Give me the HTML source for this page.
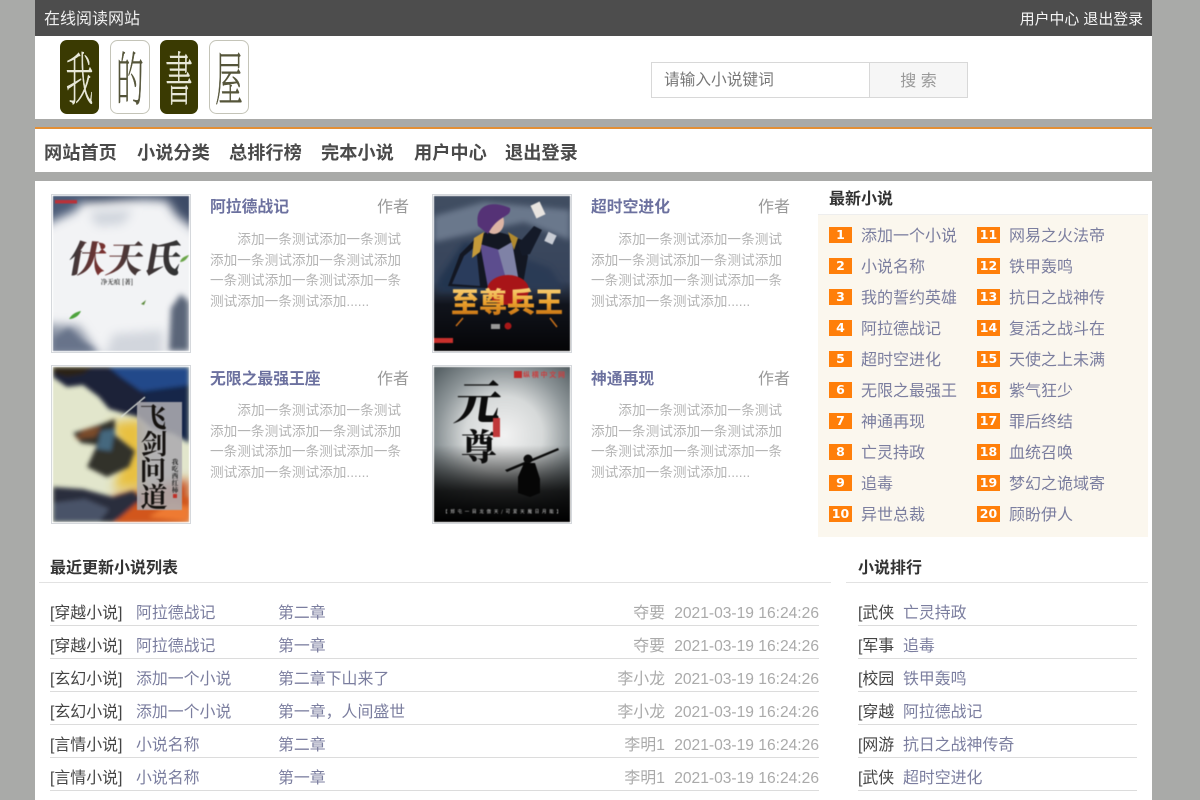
<!DOCTYPE html>
<html lang="zh-CN"><head><meta charset="utf-8"><title>在线阅读网站</title>
<style>
*{margin:0;padding:0;box-sizing:border-box}
html,body{width:1200px;height:800px;overflow:hidden;background:#a9aaa8}
body{position:relative;font-family:"Liberation Sans","Noto Sans CJK SC",sans-serif;color:#333}
.a{position:absolute;white-space:nowrap}
.w{position:absolute;background:#fff;left:35px;width:1117px}
.h{font-weight:bold;font-size:16px;color:#333;line-height:20px;margin-top:1px}
.nav{top:142px;font-size:18.2px;font-weight:bold;color:#4a4a4a;line-height:22px}
.cov{position:absolute;width:140px;height:159px;background:#fff;border:1px solid #d5d8dc;padding:1px;overflow:hidden}
.cov svg{display:block;width:136px;height:155px;filter:blur(.45px)}
.t{font-size:15.8px;font-weight:bold;color:#6c719f;line-height:20px}
.au{font-size:16px;color:#999;line-height:20px}
.s{position:absolute;width:192px;font-size:13.65px;line-height:20.6px;color:#b4b4b4;text-indent:27.3px;word-break:break-all}
.n{position:absolute;width:23px;height:16px;background:#ff7f0a;color:#fff;font:bold 12.5px/16px "DejaVu Sans",sans-serif;text-align:center}
.x{position:absolute;font-size:16px;line-height:20px;color:#7b7e9f;white-space:nowrap;margin-top:1px}
.r{position:absolute;height:33px;border-bottom:1px solid #dcdcdc}
.r span{position:absolute;top:0;line-height:42px;font-size:15.9px;white-space:nowrap}
.r span.d{font-size:15.6px}
.c{color:#444}.l{color:#7b7e9f}.m{color:#aaa}
</style></head><body>
<div class="a" style="left:35px;top:0;width:1117px;height:36px;background:#4d4d4d"></div>
<div class="a" style="left:44px;top:10px;font-size:16px;line-height:20px;color:#f0f0f0">在线阅读网站</div>
<div class="a" style="right:57px;top:10px;font-size:14.9px;line-height:20px;color:#f5f5f5">用户中心 退出登录</div>

<div class="w" style="top:36px;height:83px"></div>
<svg class="a" style="left:58px;top:38px" width="194" height="78" viewBox="0 0 194 78">
<rect x="2" y="2" width="39" height="74" rx="7" fill="#3a3a02"/>
<rect x="52.5" y="2.5" width="39" height="73" rx="7" fill="#fff" stroke="#c4c4b8"/>
<rect x="102" y="2" width="38" height="74" rx="7" fill="#3a3a02"/>
<rect x="151.5" y="2.5" width="39" height="73" rx="7" fill="#fff" stroke="#c4c4b8"/>
<g font-family="'Noto Serif CJK SC',serif" font-weight="200" text-anchor="middle">
<text transform="translate(21.5,50) scale(.95,2)" font-size="29" fill="#e8e8d8" y="6" stroke="#e8e8d8" stroke-width=".3">我</text>
<text transform="translate(72,50) scale(.95,2)" font-size="29" fill="#55553a" y="6" stroke="#55553a" stroke-width=".3">的</text>
<text transform="translate(121,50) scale(.95,2)" font-size="29" fill="#e8e8d8" y="6" stroke="#e8e8d8" stroke-width=".3">書</text>
<text transform="translate(171,50) scale(.95,2)" font-size="29" fill="#55553a" y="6" stroke="#55553a" stroke-width=".3">屋</text>
</g></svg>

<div class="a" style="left:651px;top:62px;width:219px;height:36px;background:#fff;border:1px solid #d8d8d8;font-size:15.7px;line-height:35px;padding-left:12px;color:#777">请输入小说键词</div>
<div class="a" style="left:869px;top:62px;width:99px;height:36px;background:#f6f6f6;border:1px solid #d8d8d8;font-size:16px;line-height:37px;text-align:center;color:#999">搜 索</div>

<div class="a" style="left:35px;top:127px;width:1117px;height:2px;background:#e38f35"></div>
<div class="w" style="top:129px;height:43px"></div>
<div class="a nav" style="left:44px">网站首页</div>
<div class="a nav" style="left:137px">小说分类</div>
<div class="a nav" style="left:229px">总排行榜</div>
<div class="a nav" style="left:321px">完本小说</div>
<div class="a nav" style="left:414px">用户中心</div>
<div class="a nav" style="left:505px">退出登录</div>

<div class="w" style="top:181px;height:619px"></div>

<div class="cov" style="left:51px;top:194px"><svg viewBox="0 0 136 155">
<defs>
<filter id="b1" filterUnits="userSpaceOnUse" x="-30" y="-30" width="196" height="215"><feGaussianBlur stdDeviation="5"/></filter>
<filter id="b1s" filterUnits="userSpaceOnUse" x="-30" y="-30" width="196" height="215"><feGaussianBlur stdDeviation="3"/></filter>
<linearGradient id="rd1" x1="0" x2="1"><stop offset="0" stop-color="#35383a"/><stop offset=".3" stop-color="#7d3230"/><stop offset=".5" stop-color="#4a3838"/><stop offset="1" stop-color="#303334"/></linearGradient></defs>
<rect width="136" height="155" fill="#f2f3f5"/>
<g filter="url(#b1)">
<path d="M-10-10H146V6L90 3 50 6-10 8Z" fill="#3a4a64"/>
<path d="M-10-10H34L24 14-10 30Z" fill="#4c5c78"/>
<path d="M104-10H146V36L124 20Z" fill="#3c4c66"/>
<path d="M36 16 80 14 70 28 44 30Z" fill="#cfd4dc"/>
<path d="M-10 128 26 130 50 165H-10Z" fill="#8b94a6"/>
<path d="M60 138 110 134 110 165 50 165Z" fill="#d2d6dd"/>
</g>
<g filter="url(#b1s)"><path d="M116 155 118 112 128 98 136 106V155Z" fill="#5a6578"/><path d="M0 142 16 132 30 146 44 155H0Z" fill="#68738a"/></g>
<rect x="2" y="4" width="22" height="3.5" fill="#b8323a"/>
<path d="M16 123C19 118 23 116 28 115 26 120 21 123 16 123Z" fill="#4da33c"/><path d="M127 66C128 62 132 60 136 59 134 63 131 66 127 66Z" fill="#6aa548"/><path d="M88 108 93 104 91 109Z" fill="#5c8a3c"/>
<text transform="translate(70,76) skewX(-10)" text-anchor="middle" font-family="'Noto Serif CJK SC',serif" font-weight="900" font-size="37" fill="url(#rd1)" textLength="112">伏天氏</text>
<text x="64" y="88" text-anchor="middle" font-family="'Noto Serif CJK SC',serif" font-weight="700" font-size="6.5" fill="#444">净无痕 [著]</text>
</svg></div>

<div class="cov" style="left:432px;top:194px"><svg viewBox="0 0 136 155">
<defs><linearGradient id="g2" x1="0" y1="0" x2="0" y2="1"><stop offset="0" stop-color="#414e62"/><stop offset=".55" stop-color="#36435a"/><stop offset=".7" stop-color="#11141c"/><stop offset="1" stop-color="#050507"/></linearGradient>
<linearGradient id="g2b" x1="0" y1="0" x2="0" y2="1"><stop offset="0" stop-color="#ffe79a"/><stop offset=".55" stop-color="#eaa02c"/><stop offset="1" stop-color="#b8600c"/></linearGradient>
<filter id="b2" filterUnits="userSpaceOnUse" x="-30" y="-30" width="196" height="215"><feGaussianBlur stdDeviation="3"/></filter></defs>
<rect width="136" height="155" fill="url(#g2)"/>
<g filter="url(#b2)"><path d="M0 20 50 6 136 14V44L90 26 0 46Z" fill="#6a788c"/><path d="M4 84 30 46 50 50 54 96H4Z" fill="#243450"/><path d="M84 60 116 72 130 94H78Z" fill="#2a3a54"/></g>
<path d="M14 90 26 58 42 42 56 34 72 38 88 44 94 60 88 94Z" fill="#131722"/>
<path d="M18 88 30 60 42 50 46 90Z" fill="#2a3c5c"/>
<path d="M46 48 66 54 76 90 54 92Z" fill="#5c4d8e"/><path d="M64 54 78 46 86 92 74 90Z" fill="#7f82a6"/>
<path d="M40 42 50 36 46 56 38 62Z" fill="#c59a3a"/><path d="M74 36 84 42 80 54Z" fill="#b0892e"/>
<ellipse cx="60" cy="26" rx="10" ry="12" fill="#dcb4a4"/><path d="M44 30C40 8 58 4 76 12 78 22 64 18 54 38Z" fill="#553276"/>
<path d="M84 48 100 30 108 34 96 58 88 60Z" fill="#141a28"/>
<rect x="99" y="7" width="10" height="14" transform="rotate(-25 104 14)" fill="#e8e4e0"/><rect x="112" y="37" width="9" height="10" transform="rotate(25 116 42)" fill="#c8ccd4"/>
<ellipse cx="74" cy="94" rx="21" ry="15" fill="#a81518"/>
<text x="73" y="116" text-anchor="middle" font-family="'Noto Sans CJK SC',sans-serif" font-weight="900" font-size="28" fill="url(#g2b)" textLength="112" lengthAdjust="spacingAndGlyphs">至尊兵王</text>
<path d="M22 130 29 122M116 122 123 131" stroke="#c8701a" stroke-width="1.5"/>
<rect x="57" y="128" width="9" height="5" fill="#999"/><circle cx="74" cy="130" r="3.5" fill="#a81818"/>
<rect x="0" y="142" width="19" height="5" fill="#c8302c"/>
</svg></div>

<div class="cov" style="left:51px;top:365px"><svg viewBox="0 0 136 155">
<defs><filter id="b3" filterUnits="userSpaceOnUse" x="-30" y="-30" width="196" height="215"><feGaussianBlur stdDeviation="2"/></filter>
<filter id="b3b" filterUnits="userSpaceOnUse" x="-30" y="-30" width="196" height="215"><feGaussianBlur stdDeviation="5"/></filter></defs>
<rect width="136" height="155" fill="#e2e6cc"/>
<g filter="url(#b3b)"><path d="M58 56 90 52 92 120 60 122 72 90Z" fill="#e8c040"/><path d="M60 130 136 112V155H60Z" fill="#c84a18"/></g>
<g filter="url(#b3)">
<path d="M0 0H136V70L100 62 86 50 70 46 56 42 46 30 30 18 14 20 0 10Z" fill="#1d2438"/>
<path d="M56 0H136V40L112 26 88 24 68 10Z" fill="#24488a"/>
<path d="M0 0H40L30 7 14 10 0 6Z" fill="#2a2418"/>
<path d="M90 24 136 18V76L100 54Z" fill="#16264a"/>
<path d="M20 66 46 58 62 52 62 68 82 84 76 100 54 110 34 100 44 78 28 76Z" fill="#33302c"/>
<path d="M22 72 32 62 48 60 42 70Z" fill="#7a4c2a"/>
<path d="M48 64 62 62 58 84 44 82Z" fill="#44677e"/>
<path d="M0 120 30 122 60 130 80 124 92 136 60 155H0Z" fill="#2b2e3c"/>
<path d="M0 136 32 132 56 142 46 155H0Z" fill="#4a5268"/>
<path d="M62 155 84 136 112 128 136 130V155Z" fill="#d2561c"/>
<path d="M96 150 118 136 136 140V155Z" fill="#ee7a30"/>
</g>
<path d="M68 50 92 30" stroke="#dfe4dc" stroke-width="1.2"/>
<rect x="84" y="35" width="45" height="108" fill="#acabaf" opacity=".88"/>
<g font-family="'Noto Serif CJK SC',serif" font-weight="700" font-size="27" fill="#15120f" text-anchor="middle">
<text x="100" y="60">飞</text><text x="101" y="87">剑</text><text x="100" y="113">问</text><text x="101" y="140">道</text></g>
<g font-family="'Noto Serif CJK SC',serif" font-weight="700" font-size="6.5" fill="#222" text-anchor="middle">
<text x="122" y="97">我</text><text x="122" y="104">吃</text><text x="122" y="111">西</text><text x="122" y="118">红</text><text x="122" y="125">柿</text></g>
<rect x="120" y="127" width="4" height="4" fill="#c03028"/>
</svg></div>

<div class="cov" style="left:432px;top:365px"><svg viewBox="0 0 136 155">
<defs><radialGradient id="g4" gradientUnits="userSpaceOnUse" cx="70" cy="68" r="92"><stop offset="0" stop-color="#f2f2f2"/><stop offset=".42" stop-color="#d6d9d9"/><stop offset=".72" stop-color="#8e9699"/><stop offset="1" stop-color="#5a6468"/></radialGradient>
<linearGradient id="g4b" x1="0" y1="0" x2="0" y2="1"><stop offset="0" stop-color="#000" stop-opacity="0"/><stop offset=".6" stop-color="#050505" stop-opacity=".85"/><stop offset="1" stop-color="#000"/></linearGradient></defs>
<rect width="136" height="155" fill="url(#g4)"/>
<rect y="78" width="136" height="77" fill="url(#g4b)"/>
<g font-family="'Noto Serif CJK SC',serif" font-weight="900" fill="#0c0c0c" text-anchor="middle"><text transform="translate(42,52) skewX(-8)" font-size="46" textLength="50">元</text><text x="45" y="93" font-size="36">尊</text></g>
<rect x="59" y="51" width="7" height="19" fill="#c0383a"/>
<rect x="80" y="4" width="8" height="7" fill="#c02a2a"/>
<text x="110" y="10" text-anchor="middle" font-size="7" font-weight="700" fill="#c84040" font-family="'Noto Sans CJK SC',sans-serif" textLength="42">纵横中文网</text>
<path d="M71 103 124 81 125 83 73 105Z" fill="#0a0a0a"/>
<circle cx="94" cy="92" r="4.5" fill="#0a0a0a"/>
<path d="M90 96H101L106 112 106 126 96 130 84 126 84 110Z" fill="#060606"/>
<text x="68" y="146" text-anchor="middle" font-size="4.5" fill="#cfcfcf" font-family="'Noto Sans CJK SC',sans-serif" textLength="118">【 郑 屯 一 目 龙 傲 天 / 可 爱 天 魔 日 月 能 】</text>
</svg></div>

<div class="a t" style="left:210px;top:198px">阿拉德战记</div><div class="a au" style="left:377px;top:198px">作者</div>
<div class="s" style="left:210px;top:230px">添加一条测试添加一条测试添加一条测试添加一条测试添加一条测试添加一条测试添加一条测试添加一条测试添加......</div>
<div class="a t" style="left:591px;top:198px">超时空进化</div><div class="a au" style="left:758px;top:198px">作者</div>
<div class="s" style="left:591px;top:230px">添加一条测试添加一条测试添加一条测试添加一条测试添加一条测试添加一条测试添加一条测试添加一条测试添加......</div>
<div class="a t" style="left:210px;top:370px">无限之最强王座</div><div class="a au" style="left:377px;top:370px">作者</div>
<div class="s" style="left:210px;top:401px">添加一条测试添加一条测试添加一条测试添加一条测试添加一条测试添加一条测试添加一条测试添加一条测试添加......</div>
<div class="a t" style="left:591px;top:370px">神通再现</div><div class="a au" style="left:758px;top:370px">作者</div>
<div class="s" style="left:591px;top:401px">添加一条测试添加一条测试添加一条测试添加一条测试添加一条测试添加一条测试添加一条测试添加一条测试添加......</div>

<div class="a h" style="left:829px;top:189px">最新小说</div>
<div class="a" style="left:818px;top:214px;width:330px;height:323px;background:#fbf7ee;border-top:1px solid #eee"></div>

<div class="n" style="left:829px;top:227px">1</div><div class="x" style="left:861px;top:226px">添加一个小说</div>
<div class="n" style="left:829px;top:258px">2</div><div class="x" style="left:861px;top:257px">小说名称</div>
<div class="n" style="left:829px;top:289px">3</div><div class="x" style="left:861px;top:288px">我的誓约英雄</div>
<div class="n" style="left:829px;top:320px">4</div><div class="x" style="left:861px;top:319px">阿拉德战记</div>
<div class="n" style="left:829px;top:351px">5</div><div class="x" style="left:861px;top:350px">超时空进化</div>
<div class="n" style="left:829px;top:382px">6</div><div class="x" style="left:861px;top:381px">无限之最强王</div>
<div class="n" style="left:829px;top:413px">7</div><div class="x" style="left:861px;top:412px">神通再现</div>
<div class="n" style="left:829px;top:444px">8</div><div class="x" style="left:861px;top:443px">亡灵持政</div>
<div class="n" style="left:829px;top:475px">9</div><div class="x" style="left:861px;top:474px">追毒</div>
<div class="n" style="left:829px;top:506px">10</div><div class="x" style="left:861px;top:505px">异世总裁</div>
<div class="n" style="left:977px;top:227px">11</div><div class="x" style="left:1009px;top:226px">网易之火法帝</div>
<div class="n" style="left:977px;top:258px">12</div><div class="x" style="left:1009px;top:257px">铁甲轰鸣</div>
<div class="n" style="left:977px;top:289px">13</div><div class="x" style="left:1009px;top:288px">抗日之战神传</div>
<div class="n" style="left:977px;top:320px">14</div><div class="x" style="left:1009px;top:319px">复活之战斗在</div>
<div class="n" style="left:977px;top:351px">15</div><div class="x" style="left:1009px;top:350px">天使之上未满</div>
<div class="n" style="left:977px;top:382px">16</div><div class="x" style="left:1009px;top:381px">紫气狂少</div>
<div class="n" style="left:977px;top:413px">17</div><div class="x" style="left:1009px;top:412px">罪后终结</div>
<div class="n" style="left:977px;top:444px">18</div><div class="x" style="left:1009px;top:443px">血统召唤</div>
<div class="n" style="left:977px;top:475px">19</div><div class="x" style="left:1009px;top:474px">梦幻之诡域寄</div>
<div class="n" style="left:977px;top:506px">20</div><div class="x" style="left:1009px;top:505px">顾盼伊人</div>

<div class="a h" style="left:50px;top:558px">最近更新小说列表</div>
<div class="a" style="left:39px;top:582px;width:792px;height:1px;background:#e2e2e2"></div>
<div class="a h" style="left:858px;top:558px">小说排行</div>
<div class="a" style="left:846px;top:582px;width:302px;height:1px;background:#e2e2e2"></div>

<div class="r" style="left:50px;width:769px;top:593px"><span class="c" style="left:0">[穿越小说]</span><span class="l" style="left:86px">阿拉德战记</span><span class="l" style="left:228px">第二章</span><span class="m" style="right:154px">夺要</span><span class="m d" style="right:0">2021-03-19 16:24:26</span></div>
<div class="r" style="left:50px;width:769px;top:626px"><span class="c" style="left:0">[穿越小说]</span><span class="l" style="left:86px">阿拉德战记</span><span class="l" style="left:228px">第一章</span><span class="m" style="right:154px">夺要</span><span class="m d" style="right:0">2021-03-19 16:24:26</span></div>
<div class="r" style="left:50px;width:769px;top:659px"><span class="c" style="left:0">[玄幻小说]</span><span class="l" style="left:86px">添加一个小说</span><span class="l" style="left:228px">第二章下山来了</span><span class="m" style="right:154px">李小龙</span><span class="m d" style="right:0">2021-03-19 16:24:26</span></div>
<div class="r" style="left:50px;width:769px;top:692px"><span class="c" style="left:0">[玄幻小说]</span><span class="l" style="left:86px">添加一个小说</span><span class="l" style="left:228px">第一章，人间盛世</span><span class="m" style="right:154px">李小龙</span><span class="m d" style="right:0">2021-03-19 16:24:26</span></div>
<div class="r" style="left:50px;width:769px;top:725px"><span class="c" style="left:0">[言情小说]</span><span class="l" style="left:86px">小说名称</span><span class="l" style="left:228px">第二章</span><span class="m" style="right:154px">李明1</span><span class="m d" style="right:0">2021-03-19 16:24:26</span></div>
<div class="r" style="left:50px;width:769px;top:758px"><span class="c" style="left:0">[言情小说]</span><span class="l" style="left:86px">小说名称</span><span class="l" style="left:228px">第一章</span><span class="m" style="right:154px">李明1</span><span class="m d" style="right:0">2021-03-19 16:24:26</span></div>

<div class="r" style="left:858px;width:279px;top:593px"><span class="c" style="left:0">[武侠</span><span class="l" style="left:45px">亡灵持政</span></div>
<div class="r" style="left:858px;width:279px;top:626px"><span class="c" style="left:0">[军事</span><span class="l" style="left:45px">追毒</span></div>
<div class="r" style="left:858px;width:279px;top:659px"><span class="c" style="left:0">[校园</span><span class="l" style="left:45px">铁甲轰鸣</span></div>
<div class="r" style="left:858px;width:279px;top:692px"><span class="c" style="left:0">[穿越</span><span class="l" style="left:45px">阿拉德战记</span></div>
<div class="r" style="left:858px;width:279px;top:725px"><span class="c" style="left:0">[网游</span><span class="l" style="left:45px">抗日之战神传奇</span></div>
<div class="r" style="left:858px;width:279px;top:758px"><span class="c" style="left:0">[武侠</span><span class="l" style="left:45px">超时空进化</span></div>
</body></html>
